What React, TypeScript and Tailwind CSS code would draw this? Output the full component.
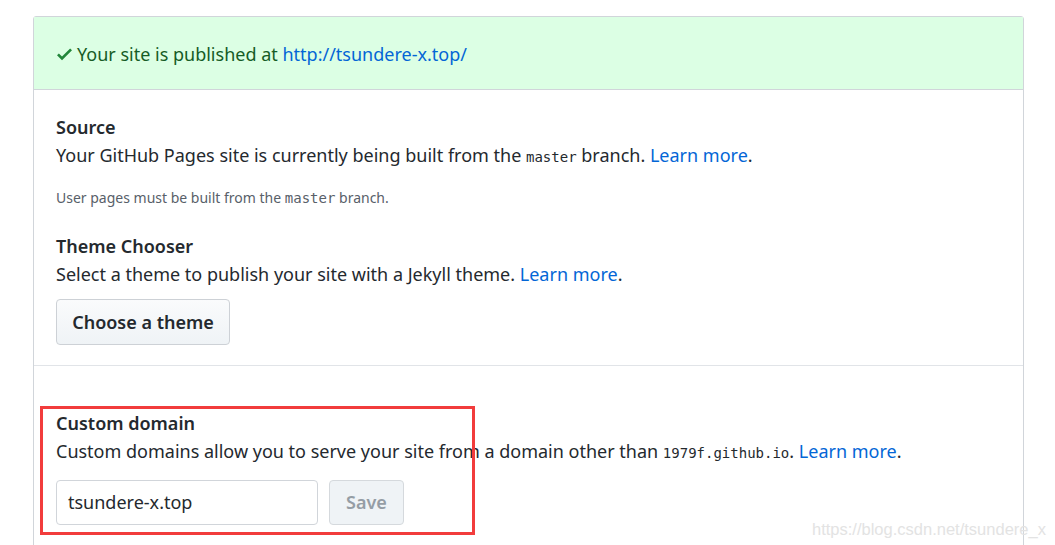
import React from 'react';

const sans = 'font-["Noto_Sans","Open_Sans",sans-serif]';
const mono = 'font-["DejaVu_Sans_Mono","Liberation_Mono",monospace]';
const link = 'text-[#0366d6]';

function CheckIcon() {
  return (
    <svg width="15" height="20" viewBox="0 0 12 16" className="fill-[#22863a] shrink-0">
      <path d="M12 5l-8 8-4-4 1.5-1.5L4 10l6.5-6.5L12 5z" />
    </svg>
  );
}

export default function App() {
  return (
    <div className={`relative w-[1055px] h-[545px] overflow-hidden bg-white text-[#24292e] ${sans}`}>
      <div className="ml-[33px] mt-[16px] w-[991px] border border-[#d1d5da] rounded-t-[3px]">
        <div className="h-[73px] pt-[2px] bg-[#dcffe4] border-b border-[#d1d5da] flex items-center gap-[5px] pl-[23px] text-[18px] text-[#165c26]">
          <CheckIcon />
          <span>
            Your site is published at <span className={link}>http://tsundere-x.top/</span>
          </span>
        </div>

        <div className="px-[22px] pt-[23px] pb-[20px] border-b border-[#e1e4e8]">
          <h3 className="text-[18px] leading-[28px] font-semibold">Source</h3>
          <p className="text-[18px] leading-[29px]">
            Your GitHub Pages site is currently being built from the{' '}
            <code className={`${mono} text-[14px]`}>master</code> branch. <span className={link}>Learn more</span>.
          </p>
          <p className="mt-[15px] text-[14px] leading-[21px] text-[#586069]">
            User pages must be built from the <code className={`${mono} text-[14px]`}>master</code> branch.
          </p>
          <h3 className="mt-[23px] text-[18px] leading-[28px] font-semibold">Theme Chooser</h3>
          <p className="text-[18px] leading-[29px]">
            Select a theme to publish your site with a Jekyll theme. <span className={link}>Learn more</span>.
          </p>
          <button className="mt-[10px] h-[46px] w-[174px] rounded-[4px] border border-[#cdd1d6] bg-gradient-to-b from-[#fafbfc] to-[#eff3f6] text-[18px] font-semibold">
            Choose a theme
          </button>
        </div>

        <div className="px-[22px] pt-[43px] pb-[40px]">
          <h3 className="text-[18px] leading-[28px] font-semibold">Custom domain</h3>
          <p className="text-[18px] leading-[29px]">
            Custom domains allow you to serve your site from a domain other than{' '}
            <code className={`${mono} text-[14px]`}>1979f.github.io</code>. <span className={link}>Learn more</span>.
          </p>
          <div className="mt-[12px] flex gap-[11px]">
            <div className="h-[45px] w-[262px] rounded-[4px] border border-[#d1d5da] flex items-center px-[11px] text-[18px]">
              tsundere-x.top
            </div>
            <button className="h-[45px] w-[75px] rounded-[4px] border border-[#d5d9dd] bg-[#eff3f6] text-[18px] font-semibold text-[#959da5]">
              Save
            </button>
          </div>
        </div>
      </div>

      <div className="absolute left-[40px] top-[406px] w-[435px] h-[129px] border-[3px] border-[#f23c3c] pointer-events-none" />
      <div className="absolute left-[812px] top-[517px] text-[16.5px] whitespace-nowrap text-[#e3e3e3] font-['Liberation_Sans',sans-serif] pointer-events-none">
        https://blog.csdn.net/tsundere_x
      </div>
    </div>
  );
}
